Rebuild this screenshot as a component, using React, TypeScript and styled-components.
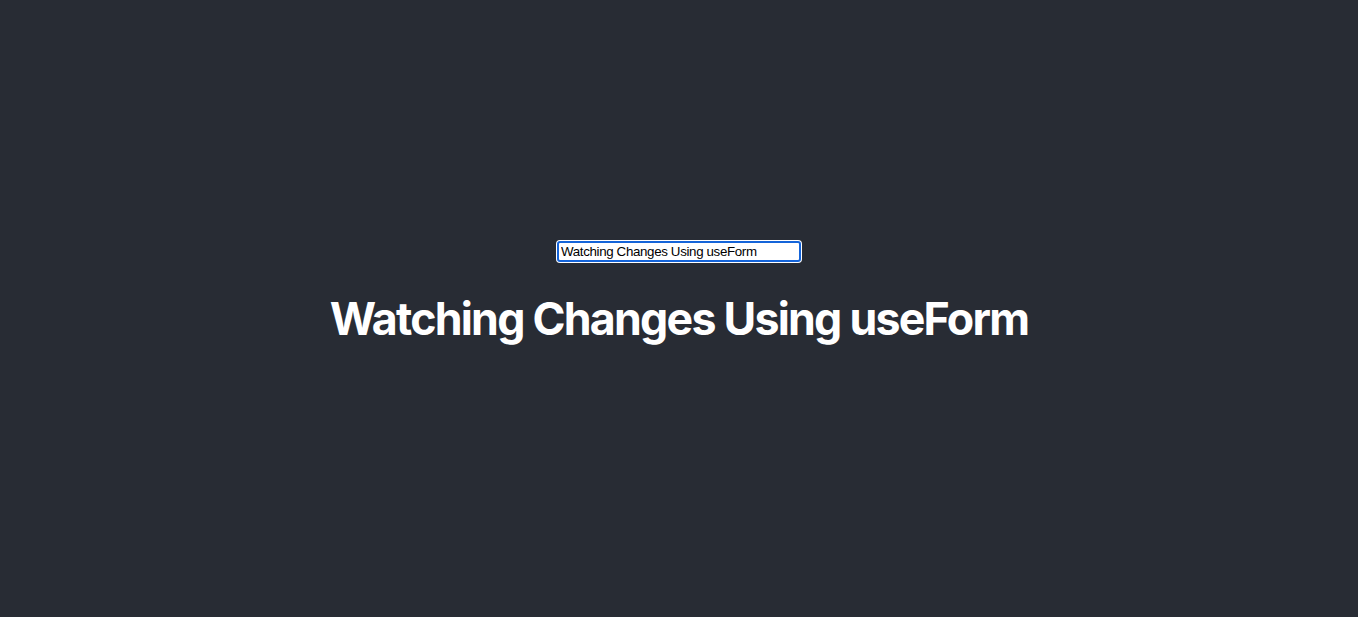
import React from "react";
import styled, { createGlobalStyle } from "styled-components";

const Global = createGlobalStyle`
  html, body { margin: 0; padding: 0; background: #282c34; }
  body { font-family: Inter, "Noto Sans", sans-serif; }
`;

const Header = styled.header`
  min-height: 100vh;
  display: flex;
  flex-direction: column;
  align-items: center;
  justify-content: center;
  color: #ffffff;
  font-size: calc(10px + 2vmin);
  background: #282c34;
`;

const Field = styled.input`
  box-sizing: border-box;
  width: 244px;
  height: 21px;
  padding: 0 2px;
  margin: 0;
  font-family: "Liberation Sans", Arial, sans-serif;
  font-size: 13.33px;
  letter-spacing: -0.35px;
  color: #000;
  background: #fff;
  border: 2px solid #1464d9;
  border-radius: 3px;
  box-shadow: 0 0 0 1px #ffffff;
  outline: none;
`;

const Title = styled.h1`
  font-family: Inter, "Noto Sans", sans-serif;
  font-weight: 700;
  font-size: 2em;
  margin: 0.67em 0;
  letter-spacing: -1.75px;
`;

export default function App() {
  return (
    <>
      <Global />
      <Header>
        <Field defaultValue="Watching Changes Using useForm" />
        <Title>Watching Changes Using useForm</Title>
      </Header>
    </>
  );
}
